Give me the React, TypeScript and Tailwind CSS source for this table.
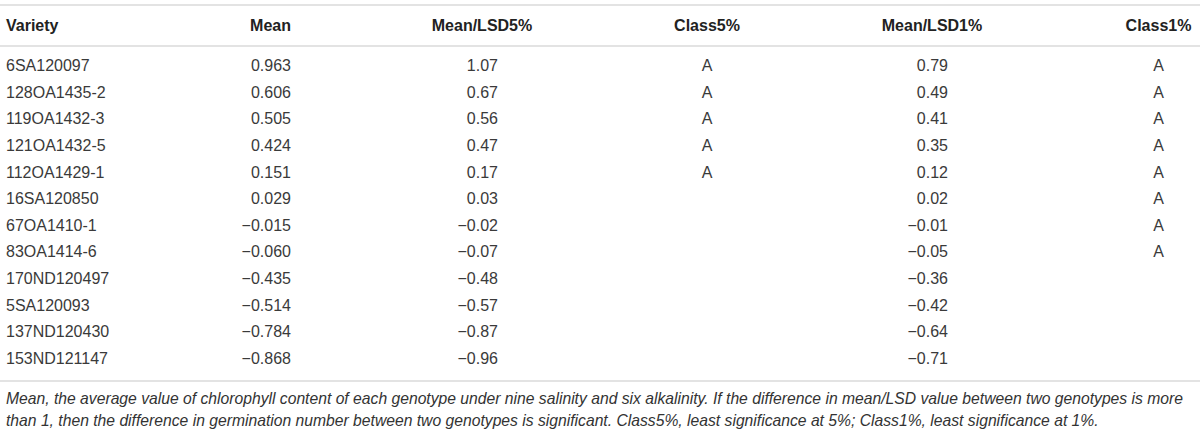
const rows: [string, string, string, string, string, string][] = [
  ["6SA120097", "0.963", "1.07", "A", "0.79", "A"],
  ["128OA1435-2", "0.606", "0.67", "A", "0.49", "A"],
  ["119OA1432-3", "0.505", "0.56", "A", "0.41", "A"],
  ["121OA1432-5", "0.424", "0.47", "A", "0.35", "A"],
  ["112OA1429-1", "0.151", "0.17", "A", "0.12", "A"],
  ["16SA120850", "0.029", "0.03", "", "0.02", "A"],
  ["67OA1410-1", "\u22120.015", "\u22120.02", "", "\u22120.01", "A"],
  ["83OA1414-6", "\u22120.060", "\u22120.07", "", "\u22120.05", "A"],
  ["170ND120497", "\u22120.435", "\u22120.48", "", "\u22120.36", ""],
  ["5SA120093", "\u22120.514", "\u22120.57", "", "\u22120.42", ""],
  ["137ND120430", "\u22120.784", "\u22120.87", "", "\u22120.64", ""],
  ["153ND121147", "\u22120.868", "\u22120.96", "", "\u22120.71", ""],
];

export default function App() {
  return (
    <div className="w-[1200px] h-[431px] bg-white font-['Liberation_Sans',Arial,sans-serif] text-[#3a3a3a]">
      <div className="pt-[4px]">
        <table className="w-[1200px] table-fixed border-collapse">
          <colgroup>
            <col className="w-[200px]" />
            <col className="w-[97px]" />
            <col className="w-[370px]" />
            <col className="w-[80px]" />
            <col className="w-[370px]" />
            <col className="w-[83px]" />
          </colgroup>
          <thead>
            <tr className="h-[41px] border-y-2 border-[#e3e3e3] text-[16px] font-bold text-[#222]">
              <th className="pl-[6px] text-left">Variety</th>
              <th className="pr-[6px] text-right">Mean</th>
              <th className="text-center">Mean/LSD5%</th>
              <th className="text-center">Class5%</th>
              <th className="text-center">Mean/LSD1%</th>
              <th className="text-center">Class1%</th>
            </tr>
          </thead>
          <tbody className="text-[16px]">
            <tr className="h-[7px]">
              <td colSpan={6} />
            </tr>
            {rows.map((r) => (
              <tr key={r[0]} className="h-[26.6px]">
                <td className="pl-[6px] text-left">{r[0]}</td>
                <td className="pr-[6px] text-right">{r[1]}</td>
                <td className="pr-[169px] text-right">{r[2]}</td>
                <td className="text-center">{r[3]}</td>
                <td className="pr-[169px] text-right">{r[4]}</td>
                <td className="text-center">{r[5]}</td>
              </tr>
            ))}
            <tr className="h-[9px] border-b-2 border-[#e3e3e3]">
              <td colSpan={6} />
            </tr>
          </tbody>
        </table>
        <p className="px-[6px] pt-[6px] text-[15.7px] leading-[22px] italic text-[#333]">
          Mean, the average value of chlorophyll content of each genotype under nine salinity and six alkalinity. If the
          difference in mean/LSD value between two genotypes is more than 1, then the difference in germination number
          between two genotypes is significant. Class5%, least significance at 5%; Class1%, least significance at 1%.
        </p>
      </div>
    </div>
  );
}
